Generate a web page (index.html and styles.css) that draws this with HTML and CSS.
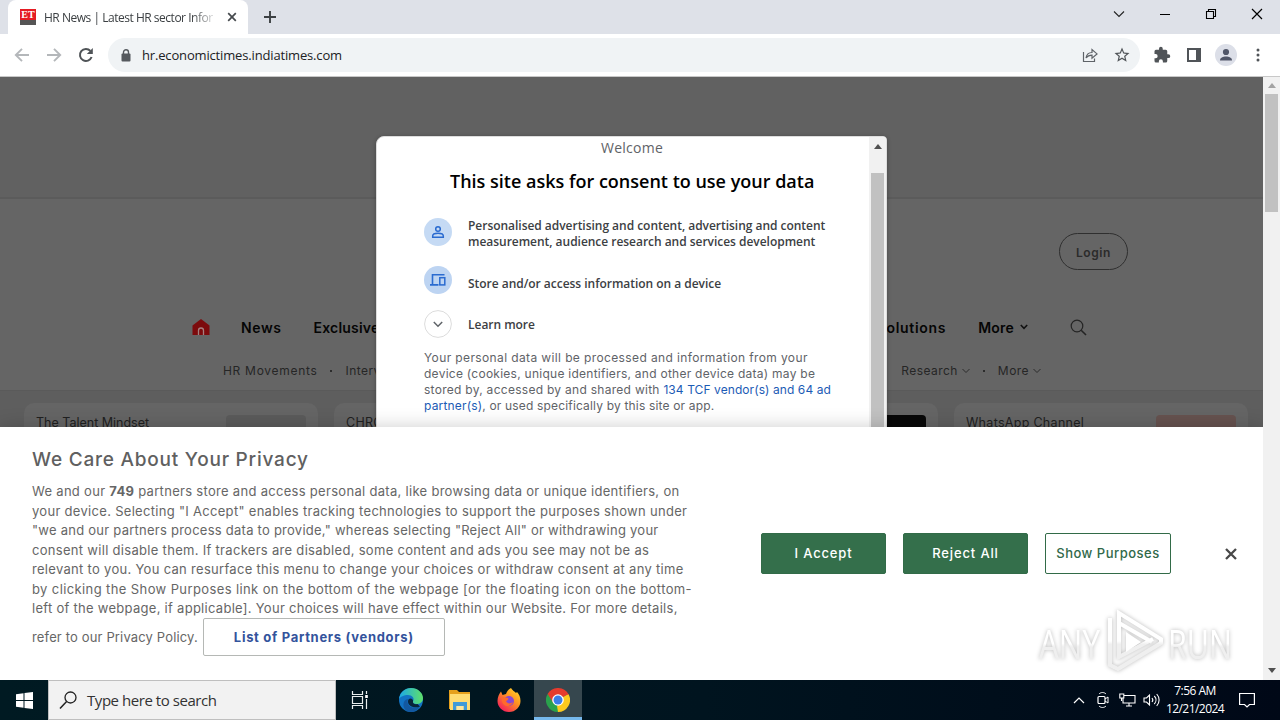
FILE: index.html
```html
<!DOCTYPE html>
<html lang="en">

<head>
    <meta charset="UTF-8">
    <meta name="viewport" content="width=device-width, initial-scale=1.0">
    <title>HR News | Latest HR sector Information</title>
    <link rel="stylesheet" href="styles.css">
</head>

<body>
    <div class="desktop">
        <!-- Tab strip -->
        <div class="tab-strip">
            <div class="tab">
                <div class="favicon"><b>ET</b><i></i></div>
                <span class="tab-title">HR News | Latest HR sector Infor</span>
                <svg class="tab-close" width="10" height="10" viewBox="0 0 10 10"><path d="M1.2 1.2l7.6 7.6M8.8 1.2L1.2 8.8" stroke="#45494d" stroke-width="1.7" /></svg>
            </div>
            <svg class="new-tab" width="14" height="14" viewBox="0 0 14 14"><path d="M7 1v12M1 7h12" stroke="#3c4043" stroke-width="1.9" /></svg>
            <div class="window-buttons">
                <svg width="12" height="12" viewBox="0 0 12 12"><path d="M1 3.5l5 5 5-5" fill="none" stroke="#222" stroke-width="1.1" /></svg>
                <svg width="12" height="12" viewBox="0 0 12 12"><path d="M1 6.5h10" stroke="#000" /></svg>
                <svg width="12" height="12" viewBox="0 0 12 12"><path d="M1.5 3.5h7v7h-7zM3.5 3V1.5h7v7H9" fill="none" stroke="#000" stroke-width="1.1" /></svg>
                <svg width="12" height="12" viewBox="0 0 12 12"><path d="M1 1l10 10M11 1L1 11" stroke="#000" stroke-width="1.2" /></svg>
            </div>
        </div>

        <!-- Toolbar -->
        <div class="toolbar">
            <svg width="16" height="16" viewBox="0 0 16 16"><path d="M15 8H2.5M8 1.8L1.8 8 8 14.2" fill="none" stroke="#b4b7ba" stroke-width="1.9" /></svg>
            <svg width="16" height="16" viewBox="0 0 16 16"><path d="M1 8h12.5M8 1.8L14.2 8 8 14.2" fill="none" stroke="#b4b7ba" stroke-width="1.9" /></svg>
            <svg width="16" height="16" viewBox="0 0 16 16"><path d="M13.6 10A6 6 0 1 1 12.4 3.9" fill="none" stroke="#4f5357" stroke-width="2" /><path d="M14.8 1v6H8.8z" fill="#4f5357" /></svg>
            <div class="address-bar">
                <svg width="10" height="13" viewBox="0 0 10 13"><path d="M2.5 5V3.3a2.5 2.5 0 0 1 5 0V5" fill="none" stroke="#55595e" stroke-width="1.4" /><rect x=".5" y="4.5" width="9" height="8" rx="1" fill="#55595e" /></svg>
                <span class="url">hr.economictimes.indiatimes.com</span>
                <svg class="share" width="16" height="16" viewBox="0 0 16 16"><path d="M1.5 5v9.500h11v-3M4 11c.6-4 2.600-5.500 6-5.500V2.500l5 4.400-5 4.200V8.200C7.500 8.200 5.500 9 4 11z" fill="none" stroke="#5f6368" stroke-width="1.2" /></svg>
                <svg class="star" width="18" height="18" viewBox="0 0 24 24"><path d="M22 9.240l-7.190-.62L12 2 9.190 8.630 2 9.240l5.460 4.730L5.820 21 12 17.270 18.180 21l-1.630-7.030L22 9.240zM12 15.400l-3.760 2.270 1-4.280-3.320-2.880 4.380-.38L12 6.100l1.710 4.040 4.380.38-3.320 2.880 1 4.280L12 15.400z" fill="#505458" /></svg>
            </div>
            <svg width="18" height="18" viewBox="0 0 24 24"><path d="M20.500 11H19V7a2 2 0 0 0-2-2h-4V3.500a2.500 2.500 0 0 0-5 0V5H4a2 2 0 0 0-2 2v3.800h1.500a2.700 2.700 0 0 1 0 5.400H2V20a2 2 0 0 0 2 2h3.800v-1.500a2.700 2.700 0 0 1 5.400 0V22H17a2 2 0 0 0 2-2v-4h1.500a2.500 2.500 0 0 0 0-5z" fill="#505458" /></svg>
            <svg width="14" height="14" viewBox="0 0 14 14"><path d="M0 0h14v14H0zM2 2v10h7V2z" fill="#505458" fill-rule="evenodd" /></svg>
            <svg class="profile" width="22" height="22" viewBox="0 0 22 22"><circle cx="11" cy="11" r="11" fill="#dcdfe8" /><circle cx="11" cy="8" r="3.100" fill="#505668" /><path d="M5 16.500c0-3 3-4 6-4s6 1 6 4z" fill="#505668" /></svg>
            <svg class="menu" width="4" height="14" viewBox="0 0 4 14"><circle cx="2" cy="2" r="1.500" fill="#505458" /><circle cx="2" cy="7" r="1.500" fill="#505458" /><circle cx="2" cy="12" r="1.500" fill="#505458" /></svg>
        </div>

        <!-- Page -->
        <div class="viewport">
            <div class="page">
                <div class="ad-slot"></div>
                <div class="site-header">
                    <div class="login-row"><span class="login">Login</span></div>
                    <div class="nav">
                        <svg class="home" width="18" height="17" viewBox="0 0 18 17"><path d="M9 0l8.500 6.500V16H.5V6.500z" fill="#7c0b0d" /><path d="M6.500 16v-4.500a2.500 2.500 0 0 1 5 0V16" fill="none" stroke="#a58080" stroke-width="1.300" /></svg>
                        <span class="nav-news">News</span>
                        <span>Exclusives</span>
                        <div class="nav-right">
                            <span class="nav-solutions">Solutions</span>
                            <span>More</span>
                            <svg class="nav-chevron" width="8" height="6" viewBox="0 0 8 6"><path d="M.8 1L4 4.300 7.200 1" fill="none" stroke="#111" stroke-width="1.600" /></svg>
                            <svg width="17" height="17" viewBox="0 0 17 17"><circle cx="7" cy="7" r="5.800" fill="none" stroke="#242424" stroke-width="1.200" /><path d="M11.200 11.200L16 16" stroke="#242424" stroke-width="1.600" /></svg>
                        </div>
                    </div>
                    <div class="subnav">
                        <span class="movements">HR Movements</span>
                        <i class="dot"></i>
                        <span>Interviews</span>
                        <div class="subnav-right">
                            <span>Research</span>
                            <svg width="8" height="6" viewBox="0 0 8 6"><path d="M.5 1L4 4.500 7.500 1" fill="none" stroke="#2c2c2c" /></svg>
                            <i class="dot"></i>
                            <span>More</span>
                            <svg width="8" height="6" viewBox="0 0 8 6"><path d="M.5 1L4 4.500 7.500 1" fill="none" stroke="#2c2c2c" /></svg>
                        </div>
                    </div>
                </div>
                <div class="cards">
                    <div class="card"><span class="card-talent">The Talent Mindset</span><div class="thumb"></div></div>
                    <div class="card"><span>CHRO</span></div>
                    <div class="card"><div class="thumb thumb-black"></div></div>
                    <div class="card"><span>WhatsApp Channel</span><div class="thumb thumb-pink"></div></div>
                </div>

                <!-- Consent dialog -->
                <div class="dialog">
                    <div class="dialog-body">
                        <p class="welcome">Welcome</p>
                        <h2 class="dialog-title">This site asks for consent to use your data</h2>
                        <div class="purpose">
                            <svg width="28" height="28" viewBox="0 0 28 28"><circle cx="14" cy="14" r="14" fill="#c5daf4" /><circle cx="14" cy="11" r="2.300" fill="none" stroke="#2a6bd0" stroke-width="1.500" /><path d="M8.700 19.200v-1.300c0-1.700 3-2.600 5.300-2.600s5.300.9 5.300 2.600v1.300z" fill="none" stroke="#2a6bd0" stroke-width="1.500" /></svg>
                            <p>Personalised advertising and content, advertising and content<br>measurement, audience research and services development</p>
                        </div>
                        <div class="purpose purpose-store">
                            <svg width="28" height="28" viewBox="0 0 28 28"><circle cx="14" cy="14" r="14" fill="#bdd4f2" /><path d="M8.500 18V8.800H20.500M6 18.900h8.500" fill="none" stroke="#2a6bd0" stroke-width="1.600" /><rect x="15.800" y="11.700" width="5" height="7.200" fill="none" stroke="#2a6bd0" stroke-width="1.500" /></svg>
                            <p>Store and/or access information on a device</p>
                        </div>
                        <div class="purpose purpose-more">
                            <svg width="28" height="28" viewBox="0 0 28 28"><circle cx="14" cy="14" r="13.400" fill="#fff" stroke="#dcdcdc" /><path d="M9.800 12l4.200 4.200 4.200-4.200" fill="none" stroke="#5f6368" stroke-width="1.500" /></svg>
                            <p>Learn more</p>
                        </div>
                        <p class="details">
                            <span class="d1">Your personal data will be processed and information from your</span><br>
                            <span class="d2">device (cookies, unique identifiers, and other device data) may be</span><br>
                            <span class="d3">stored by, accessed by and shared with <a>134 TCF vendor(s) and 64 ad</a></span><br>
                            <span class="d4"><a>partner(s)</a>, or used specifically by this site or app.</span>
                        </p>
                    </div>
                    <div class="dialog-scroll"><i class="arrow-up"></i><div class="dialog-thumb"></div></div>
                </div>

                <!-- Cookie banner -->
                <div class="banner">
                    <div class="banner-text">
                        <h2>We Care About Your Privacy</h2>
                        <p>
                            <span class="b1">We and our <b>749</b> partners store and access personal data, like browsing data or unique identifiers, on</span><br>
                            <span class="b2">your device. Selecting "I Accept" enables tracking technologies to support the purposes shown under</span><br>
                            <span class="b3">"we and our partners process data to provide," whereas selecting "Reject All" or withdrawing your</span><br>
                            <span class="b4">consent will disable them. If trackers are disabled, some content and ads you see may not be as</span><br>
                            <span class="b5">relevant to you. You can resurface this menu to change your choices or withdraw consent at any time</span><br>
                            <span class="b6">by clicking the Show Purposes link on the bottom of the webpage [or the floating icon on the bottom-</span><br>
                            <span class="b7">left of the webpage, if applicable]. Your choices will have effect within our Website. For more details,</span>
                        </p>
                        <div class="policy-row"><span class="b8">refer to our Privacy Policy.</span><span class="vendors">List of Partners (vendors)</span></div>
                    </div>
                    <div class="banner-buttons">
                        <span class="btn">I Accept</span>
                        <span class="btn">Reject All</span>
                        <span class="btn btn-outline">Show Purposes</span>
                        <svg width="12" height="12" viewBox="0 0 12 12"><path d="M1 1l10 10M11 1L1 11" stroke="#484848" stroke-width="2.300" /></svg>
                    </div>
                </div>

                <svg class="watermark" width="226" height="66" viewBox="0 0 226 66">
                    <defs>
                        <linearGradient id="fade" x1="0" y1="0" x2="0" y2="1">
                            <stop offset="50%" stop-color="#fff" />
                            <stop offset="56%" stop-color="#efefef" />
                        </linearGradient>
                    </defs>
                    <text x="3" y="50" textLength="61" lengthAdjust="spacingAndGlyphs" fill="url(#fade)">ANY</text>
                    <text x="132" y="50" textLength="64" lengthAdjust="spacingAndGlyphs" fill="url(#fade)">RUN</text>
                    <path d="M74 9v47l8 4 43-26v-4L83 4v44l34-18M83 14l33 19" fill="none" stroke="url(#fade)" stroke-width="4" />
                    <path d="M90 23v20l15-10z" fill="#fff" />
                </svg>
            </div>
            <div class="page-scroll"><i class="arrow-up"></i><div class="page-thumb"></div><i class="arrow-down"></i></div>
        </div>

        <!-- Taskbar -->
        <div class="taskbar">
            <div class="start"><svg width="17" height="17" viewBox="0 0 17 17"><path d="M0 2.300l7.500-1v6.700H0zM8.500 1.100L17 0v8H8.500zM0 9h7.500v6.700l-7.500-1zM8.500 9H17v8l-8.500-1.100z" fill="#fff" /></svg></div>
            <div class="search">
                <svg width="18" height="19" viewBox="0 0 18 19"><circle cx="11.500" cy="6.500" r="5.500" fill="none" stroke="#222" stroke-width="1.300" /><path d="M7.600 10.500L1 17.500" stroke="#222" stroke-width="1.500" /></svg>
                <span>Type here to search</span>
            </div>
            <div class="apps">
                <div class="app app-view">
                    <svg width="18" height="18" viewBox="0 0 18 18"><path d="M1.500 0v3.500h10V0M1.500 18v-3.500h10V18M1.500 5.500h10v7h-10zM15.500 0v3M15.500 8v10" fill="none" stroke="#e8eeee" stroke-width="1.200" /><rect x="14.200" y="4" width="2.600" height="3" fill="#fff" /></svg>
                </div>
                <div class="app">
                    <svg width="26" height="26" viewBox="0 0 26 26">
                        <defs><linearGradient id="edge" x1="0" y1="0" x2="1" y2="0"><stop offset="0" stop-color="#1ba8e8" /><stop offset="1" stop-color="#5fe06a" /></linearGradient></defs>
                        <circle cx="13" cy="13" r="12" fill="#1273c4" />
                        <path d="M1 12C2 5 7 1 13 1c7 0 12 5 12 10 0 4-3 6-6.500 6-3 0-4-1-3.500-2.500C17 11 14 8 10 8c-4 0-8 2-9 4z" fill="url(#edge)" />
                        <path d="M10 12c-2 6 3 11 12 7.500C20 23 16.500 25 13 25 7 25 5 20 5.500 17c.3-3 2-4.500 4.500-5z" fill="#1358a0" />
                        <path d="M15 14.500c-.7 2 2 3 4.500 2.500L22 19.500c-7 2.500-12-1-12-5 0-2 1-3 2.500-3s3 1.500 2.500 3z" fill="#08243a" />
                    </svg>
                </div>
                <div class="app">
                    <svg width="22" height="20" viewBox="0 0 22 20"><path d="M0 0h8l2 2h11v17H0z" fill="#e5a01c" /><path d="M1 4h20v16H1z" fill="#ffdc72" /><path d="M4 12h14v8h-3.500v-4h-7v4H4z" fill="#3f9bd8" /><path d="M7.500 16h7v4h-7z" fill="#fbe7a0" /></svg>
                </div>
                <div class="app">
                    <svg width="24" height="24" viewBox="0 0 24 24">
                        <defs><linearGradient id="fox" x1="1" y1="0" x2=".2" y2="1"><stop offset="0" stop-color="#ffe22d" /><stop offset=".45" stop-color="#ff9620" /><stop offset="1" stop-color="#f3165f" /></linearGradient></defs>
                        <path d="M14 0c2 3 3 3 5 5l1-1c2 2 3.500 5 3.500 9 0 6-5 11-11.500 11S.5 19 .5 13C.5 9 2 6 4 3.500L5.500 7 9 6c1-3 3-5 5-6z" fill="url(#fox)" />
                        <circle cx="12" cy="13" r="5" fill="#8a48d0" />
                        <path d="M5 9l6 1c1 1-1 3-2 3 1 3 5 3 7 1-1 5-10 6-11-1z" fill="#ff6a2c" />
                    </svg>
                </div>
                <div class="app app-active">
                    <svg width="24" height="24" viewBox="0 0 24 24">
                        <path d="M12 12L1.600 6A12 12 0 0 1 22.400 6z" fill="#e53b2e" />
                        <path d="M12 12L22.400 6A12 12 0 0 1 12 24z" fill="#fbc91f" />
                        <path d="M12 12v12A12 12 0 0 1 1.600 6z" fill="#2aa24c" />
                        <path d="M12 6.500h10.700L22.400 6H12zM7.200 14.700L1.600 6l10.400 2z" fill="#e53b2e" />
                        <path d="M16.800 14.700L12 24l-1-6z" fill="#fbc91f" />
                        <circle cx="12" cy="12" r="5.800" fill="#fff" /><circle cx="12" cy="12" r="4.500" fill="#3a7de8" />
                    </svg>
                </div>
            </div>
            <div class="tray">
                <svg width="12" height="8" viewBox="0 0 12 8"><path d="M1 7l5-5 5 5" fill="none" stroke="#fff" stroke-width="1.200" /></svg>
                <svg class="tray-camera" width="12" height="18" viewBox="0 0 12 18"><rect x="1" y="5.500" width="7" height="7" rx="1" fill="none" stroke="#fff" stroke-width="1.200" /><path d="M8 8l3-2v6l-3-2M2 3c2-2 5-2 7 0M2 15c2 2 5 2 7 0" fill="none" stroke="#fff" /></svg>
                <svg class="tray-net" width="17" height="14" viewBox="0 0 17 14"><path d="M5 2.500h11v7.500H4V5M7 13h6M10 10v3M.8 1h4v4h-4zM2.500 5v3" fill="none" stroke="#fff" stroke-width="1.100" /></svg>
                <svg class="tray-sound" width="17" height="14" viewBox="0 0 17 14"><path d="M1 5h2.500l3-3v10l-3-3H1zM9 5c1 1.200 1 2.800 0 4M11.300 3c2.200 2.300 2.200 5.700 0 8M13.700 1c3.200 3.500 3.200 8.500 0 12" fill="none" stroke="#fff" stroke-width="1.100" /></svg>
                <div class="clock"><span>7:56 AM</span><span>12/21/2024</span></div>
                <svg width="16" height="16" viewBox="0 0 16 16"><path d="M.6 1.500h14.800v11H10.500L8 15l-2.500-2.500H.6z" fill="none" stroke="#fff" stroke-width="1.200" /></svg>
            </div>
        </div>
    </div>
</body>

</html>
```

FILE: styles.css
```css
* {
    margin: 0;
    padding: 0;
    box-sizing: border-box;
}

body {
    font-family: Inter, "Liberation Sans", sans-serif;
    overflow: hidden;
}

svg {
    display: block;
    flex-shrink: 0;
}

.desktop {
    width: 1280px;
    height: 720px;
    display: flex;
    flex-direction: column;
    white-space: nowrap;
}

/* Tab strip */
.tab-strip {
    height: 34px;
    background: #dee1e8;
    display: flex;
    align-items: center;
    padding-left: 8px;
}

.tab {
    width: 240px;
    height: 34px;
    background: #fff;
    border-radius: 8px 8px 0 0;
    display: flex;
    align-items: center;
    padding: 0 11px 0 12px;
}

.favicon {
    width: 16px;
    height: 16px;
    background: #e51c23;
    color: #fff;
    font: bold 10px/11px "Liberation Serif", serif;
    text-align: center;
}

.favicon b {
    display: block;
}

.favicon i {
    display: block;
    height: 5px;
    background: #555;
}

.tab-title {
    width: 173px;
    margin-left: 8px;
    font: 12px "Open Sans", sans-serif;
    letter-spacing: -0.48px;
    color: #3c4043;
    -webkit-mask-image: linear-gradient(to right, #000 148px, transparent 174px);
    mask-image: linear-gradient(to right, #000 148px, transparent 174px);
}

.tab-close {
    margin-left: auto;
}

.new-tab {
    margin-left: 15px;
}

.window-buttons {
    margin: -6px 17px 0 auto;
    display: flex;
    gap: 34px;
}

/* Toolbar */
.toolbar {
    height: 43px;
    background: #fff;
    border-bottom: 1px solid #c8c8c8;
    display: flex;
    align-items: center;
    gap: 16px;
    padding: 0 20px 0 14px;
}

.address-bar {
    width: 1032px;
    height: 34px;
    margin-left: -2px;
    border-radius: 17px;
    background: #f0f3f5;
    display: flex;
    align-items: center;
    padding: 0 9px 0 13px;
}

.url {
    margin-left: 11px;
    font: 13px "Open Sans", sans-serif;
    letter-spacing: -0.16px;
    color: #202124;
}

.share {
    margin: 0 15px 0 auto;
}

.toolbar .address-bar + svg {
    margin-left: -3px;
}

.profile {
    margin-left: -2px;
}

.menu {
    margin-left: 3px;
}

/* Page */
.viewport {
    height: 603px;
    display: flex;
}

.page {
    width: 1263px;
    height: 603px;
    position: relative;
    overflow: hidden;
    background: #5e5e5e;
}

.ad-slot {
    height: 122px;
    background: #616161;
    border-bottom: 2px solid #5b5b5b;
}

.site-header {
    height: 192px;
    background: #656565;
    border-bottom: 1px solid #5a5a5a;
}

.login-row {
    display: flex;
    justify-content: flex-end;
    padding: 34px 135px 0 0;
}

.login {
    width: 69px;
    height: 37px;
    border: 1px solid #2f2f2f;
    border-radius: 19px;
    font-size: 12px;
    font-weight: 600;
    line-height: 37px;
    letter-spacing: 0.6px;
    text-align: center;
    color: #2b2b2b;
}

.nav {
    height: 40px;
    margin-top: 37px;
    padding: 0 176px 0 192px;
    display: flex;
    align-items: center;
    font-size: 14px;
    font-weight: 600;
    letter-spacing: 0.2px;
    color: #050505;
}

.nav-news {
    margin: 0 32px 0 31px;
    letter-spacing: 0.6px;
}

.nav-solutions {
    letter-spacing: 0.7px;
}

.nav-right {
    margin-left: auto;
    display: flex;
    align-items: center;
    gap: 32px;
}

.nav-right .nav-chevron {
    margin: 0 10px 0 -26px;
}

.subnav {
    margin-top: 15px;
    padding: 0 222px 0 223px;
    display: flex;
    align-items: center;
    font-size: 12px;
    line-height: 18px;
    letter-spacing: 0.45px;
    color: #262626;
}

.movements {
    letter-spacing: 0.7px;
}

.dot {
    width: 2px;
    height: 2px;
    margin: 0 13px;
    background: #2c2c2c;
}

.subnav-right {
    margin-left: auto;
    display: flex;
    align-items: center;
}

.subnav-right svg {
    margin-left: 4px;
}

.cards {
    display: flex;
    gap: 16px;
    padding: 12px 0 0 24px;
}

.card {
    width: 294px;
    height: 90px;
    padding: 12px;
    border-radius: 10px;
    background: #656565;
    display: flex;
    justify-content: space-between;
    font-size: 12.500px;
    line-height: 16px;
    letter-spacing: 0.3px;
    color: #202020;
}

.card-talent {
    letter-spacing: 0;
}

.thumb {
    width: 80px;
    height: 60px;
    margin-left: auto;
    border-radius: 4px;
    background: #5b5b5b;
}

.thumb-black {
    background: #080808;
}

.thumb-pink {
    background: #66524f;
}

/* Consent dialog */
.dialog {
    position: absolute;
    left: 376px;
    top: 59px;
    width: 511px;
    height: 400px;
    border: 1px solid #ddd;
    border-radius: 8px 4px 0 0;
    background: #fff;
    box-shadow: 0 1px 4px rgba(0, 0, 0, 0.3);
    display: flex;
    overflow: hidden;
    font-family: "Open Sans", sans-serif;
}

.dialog-body {
    width: 492px;
    padding: 0 0 0 47px;
}

.welcome {
    margin-left: -47px;
    padding-left: 18px;
    text-align: center;
    font-size: 14px;
    line-height: 22px;
    letter-spacing: 0.25px;
    color: #5f6368;
}

.dialog-title {
    margin: 9px 0 0 26px;
    font-size: 18px;
    font-weight: 600;
    line-height: 26px;
    color: #000;
}

.purpose {
    margin-top: 22px;
    display: flex;
    align-items: center;
    gap: 16px;
    font-size: 12px;
    font-weight: 600;
    line-height: 16px;
    letter-spacing: -0.03px;
    color: #3c4043;
}

.purpose p {
    padding-top: 2px;
    margin-bottom: -2px;
}

.purpose-store {
    margin-top: 18px;
}

.purpose-store p {
    padding-top: 6px;
}

.purpose-more {
    margin-top: 16px;
}

.purpose-more p {
    padding-top: 0;
}

.details {
    margin-top: 12px;
    font-family: Inter, sans-serif;
    font-size: 12px;
    line-height: 16px;
    color: #5f6368;
}

.d1 {
    letter-spacing: 0.38px;
}

.d2 {
    letter-spacing: 0.26px;
}

.d3 {
    letter-spacing: 0.28px;
}

.d4 {
    letter-spacing: 0.17px;
}

.details a {
    color: #1c5bb5;
}

.d3 a {
    letter-spacing: 0.08px;
}

.dialog-scroll {
    width: 17px;
    background: #f1f1f1;
    padding: 7px 2px 0;
}

.dialog-thumb {
    height: 400px;
    margin-top: 24px;
    background: #c1c1c1;
}

.arrow-up,
.arrow-down {
    display: block;
    width: 8px;
    margin: 0 auto;
    border: 4px solid transparent;
    border-top: 0;
    border-bottom: 5px solid #505050;
}

/* Cookie banner */
.banner {
    position: absolute;
    left: 0;
    bottom: 0;
    width: 1263px;
    height: 253px;
    background: #fff;
    box-shadow: 0 0 18px rgba(0, 0, 0, 0.2);
    display: flex;
    color: #666;
}

.banner-text {
    width: 761px;
    padding: 20px 0 0 32px;
}

.banner-text h2 {
    font-size: 19px;
    font-weight: 500;
    line-height: 26px;
    letter-spacing: 0.78px;
    color: #606060;
}

.banner-text p {
    margin-top: 9px;
    font-size: 13px;
    line-height: 19.500px;
    letter-spacing: 0.3px;
}

.b3 {
    letter-spacing: 0.25px;
}

.b6 {
    letter-spacing: 0.39px;
}

.b7 {
    letter-spacing: 0.28px;
}

.b8 {
    letter-spacing: 0.15px;
}

.policy-row {
    display: flex;
    align-items: center;
    gap: 5px;
    margin-top: -1px;
    font-size: 13px;
}

.vendors {
    width: 242px;
    height: 38px;
    border: 1px solid #b5b8b5;
    border-radius: 2px;
    color: #33539c;
    font-weight: 700;
    line-height: 37px;
    letter-spacing: 0.7px;
    text-align: center;
}

.banner-buttons {
    display: flex;
    align-items: center;
    gap: 17px;
}

.btn {
    width: 125px;
    height: 41px;
    border: 1px solid #326b48;
    border-radius: 2px;
    background: #346f4b;
    color: #fff;
    font-size: 13px;
    font-weight: 500;
    line-height: 39px;
    letter-spacing: 0.85px;
    text-align: center;
}

.btn-outline {
    width: 126px;
    background: #fff;
    color: #31694a;
    letter-spacing: 0.5px;
}

.banner-buttons svg {
    margin-left: 37px;
}

.watermark {
    position: absolute;
    left: 1036px;
    top: 532px;
    font: 40px "Open Sans", sans-serif;
    filter: drop-shadow(0 0 2px rgba(0, 0, 0, 0.28));
}

.page-scroll {
    width: 17px;
    background: #f1f1f1;
    padding: 6px 2px;
}

.page-scroll .arrow-up {
    border-bottom-color: #a3a3a3;
}

.page-thumb {
    height: 118px;
    margin-top: 6px;
    background: #c1c1c1;
}

.arrow-down {
    margin-top: 456px;
    border-top: 5px solid #505050;
    border-bottom: 0;
}

/* Taskbar */
.taskbar {
    height: 40px;
    background: linear-gradient(to right, #001a22, #00141f 55%, #000817);
    display: flex;
    font-family: "Open Sans", sans-serif;
}

.start {
    width: 48px;
    display: flex;
    align-items: center;
    justify-content: center;
}

.search {
    width: 288px;
    background: #f2f2f2;
    border: 1px solid #bfbfbf;
    display: flex;
    align-items: center;
    gap: 10px;
    padding-left: 10px;
    font-size: 15px;
    letter-spacing: -0.45px;
    color: #333;
}

.apps {
    display: flex;
}

.app {
    width: 49px;
    display: flex;
    align-items: center;
    justify-content: center;
}

.app-view {
    width: 50px;
    padding-right: 3px;
}

.app-active {
    width: 48px;
    margin-left: 1px;
    background: #36474e;
    border-bottom: 3px solid #76b9ed;
    padding-top: 3px;
}

.tray {
    margin-left: auto;
    padding-right: 25px;
    display: flex;
    align-items: center;
}

.tray-camera {
    margin-left: 12px;
}

.tray-net {
    margin-left: 10px;
}

.tray-sound {
    margin-left: 7px;
}

.clock {
    width: 60px;
    margin: 0 14px 0 5px;
    display: flex;
    flex-direction: column;
    align-items: center;
    font-size: 12px;
    line-height: 18px;
    letter-spacing: -0.55px;
    color: #fff;
}
```
